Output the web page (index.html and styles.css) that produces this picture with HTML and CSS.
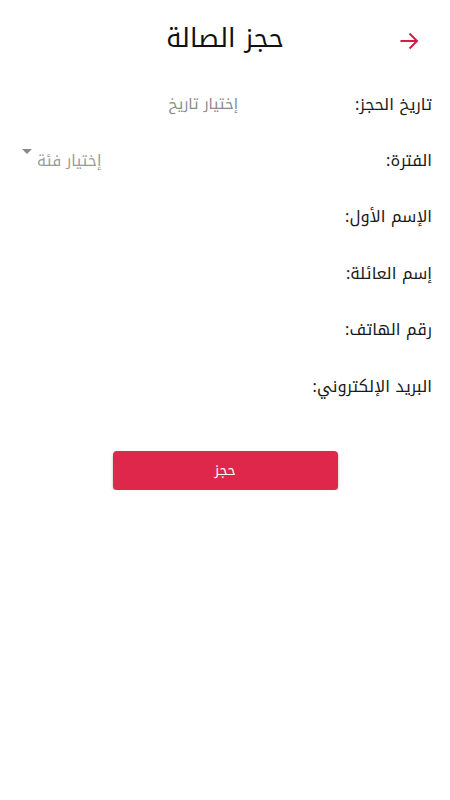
FILE: index.html
```html
<!DOCTYPE html>
<html lang="ar" dir="rtl">
<head>
  <meta charset="UTF-8" />
  <meta name="viewport" content="width=device-width, initial-scale=1.0"/>
  <title>حجز الصالة</title>
  <link rel="stylesheet" href="styles.css">
</head>
<body>
  <div class="header">
    <a class="back" href="#">
      <svg width="24" height="24" viewBox="0 0 24 24">
        <path d="M3.5 12h16M12.5 4.5l7.5 7.5-7.5 7.5" fill="none" stroke="#d81b46" stroke-width="2"/>
      </svg>
    </a>
    <h1>حجز الصالة</h1>
    <span></span>
  </div>

  <div class="form">
    <div class="row">
      <label>تاريخ الحجز:</label>
      <span class="date-field">إختيار تاريخ</span>
    </div>
    <div class="row">
      <label>الفترة:</label>
      <span class="select">
        <span>إختيار فئة</span>
        <span class="caret"></span>
      </span>
    </div>
    <div class="row"><label>الإسم الأول:</label></div>
    <div class="row"><label>إسم العائلة:</label></div>
    <div class="row"><label>رقم الهاتف:</label></div>
    <div class="row"><label>البريد الإلكتروني:</label></div>
  </div>

  <button class="submit">حجز</button>
</body>
</html>
```

FILE: styles.css
```css
body {
  margin: 0;
  font-family: "Noto Kufi Arabic", "Droid Arabic Kufi", "Noto Sans Arabic UI", "DejaVu Sans", sans-serif;
  background: #fff;
  color: #1a1a1a;
}
.header {
  display: grid;
  grid-template-columns: 1fr auto 1fr;
  align-items: center;
  height: 76px;
}
.header h1 {
  margin: 0;
  font-size: 26px;
  font-weight: normal;
  color: #111;
}
.back {
  justify-self: start;
  margin-right: 29px;
  display: flex;
  padding-top: 5px;
}
.form {
  padding: 0 18px;
}
.row {
  display: flex;
  align-items: center;
  height: 56.4px;
}
.row label {
  font-size: 16.3px;
  color: #1a1a1a;
}
.date-field {
  margin-right: 117px;
  font-size: 15px;
  color: #8a8a8a;
}
.select {
  margin-right: auto;
  margin-left: 4px;
  display: flex;
  align-items: center;
  gap: 5px;
  font-size: 15.3px;
  color: #9a9a9a;
}
.caret {
  width: 0;
  height: 0;
  border-left: 5.5px solid transparent;
  border-right: 5.5px solid transparent;
  border-top: 5px solid #8a8a8a;
  align-self: flex-start;
  margin-top: 3px;
}
.submit {
  display: block;
  margin: 37px auto 0;
  width: 225px;
  height: 39px;
  border: none;
  border-radius: 4px;
  background: #df274b;
  color: #fff;
  font-family: inherit;
  font-size: 14px;
  box-shadow: 0 2px 3px rgba(0,0,0,0.3);
}
```
